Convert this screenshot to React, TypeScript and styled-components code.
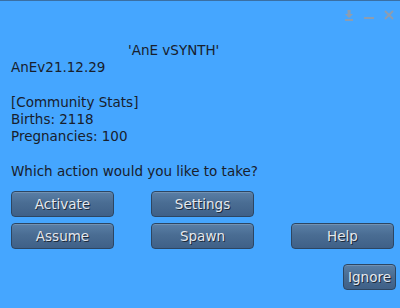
import React from "react";
import styled, { createGlobalStyle } from "styled-components";

const GlobalStyle = createGlobalStyle`
  html, body {
    margin: 0;
    padding: 0;
    width: 400px;
    height: 308px;
    overflow: hidden;
    background: #45a6ff;
  }
`;

const Dialog = styled.div`
  width: 400px;
  height: 308px;
  box-sizing: border-box;
  background: #45a6ff;
  border-top: 1px solid #3a6fa3;
  font-family: "DejaVu Sans", "Liberation Sans", sans-serif;
  color: #18202c;
  display: flex;
  flex-direction: column;
`;

const TitleBar = styled.div`
  height: 27px;
  display: flex;
  justify-content: flex-end;
  align-items: flex-start;
  gap: 10px;
  padding: 9px 6px 0 0;
  box-sizing: border-box;
`;

const IconButton = styled.div`
  width: 10px;
  height: 11px;
  display: flex;
`;

const Message = styled.div`
  padding: 14px 0 0 11px;
  font-size: 13.5px;
  line-height: 17.3px;
  white-space: pre;
`;

const Title = styled.div`
  padding-left: 117px;
`;

const ButtonGrid = styled.div`
  display: grid;
  grid-template-columns: repeat(3, 103px);
  column-gap: 37px;
  row-gap: 6px;
  padding: 11px 0 0 11px;
`;

const Button = styled.button<{ $wide?: boolean }>`
  height: 26px;
  width: ${(p) => (p.$wide ? "103px" : "auto")};
  box-sizing: border-box;
  border: 1px solid #2c4663;
  border-radius: 4px;
  background: linear-gradient(#5a7fa6, #4a6d93 45%, #3f6087);
  box-shadow: inset 0 1px 0 rgba(255, 255, 255, 0.15);
  color: #e4e8ee;
  font-family: "DejaVu Sans", "Liberation Sans", sans-serif;
  font-size: 13.5px;
  text-shadow: 1px 1px 0 #1c2a3a;
  padding: 0 4px;
  cursor: pointer;
`;

const Footer = styled.div`
  display: flex;
  justify-content: flex-end;
  padding: 15px 4px 0 0;
`;

const DockIcon = () => (
  <svg width="10" height="11" viewBox="0 0 10 11">
    <path d="M3.5 0h3v4h2.5l-4 4-4-4h2.5z" fill="#8d9db0" />
    <rect x="1" y="9" width="8" height="2" fill="#8d9db0" />
  </svg>
);

const MinIcon = () => (
  <svg width="10" height="11" viewBox="0 0 10 11">
    <rect x="0" y="7" width="10" height="2" fill="#8d9db0" />
  </svg>
);

const CloseIcon = () => (
  <svg width="10" height="11" viewBox="0 0 10 11">
    <path d="M1 1l8 8M9 1l-8 8" stroke="#8d9db0" strokeWidth="2" />
  </svg>
);

const buttons = ["Activate", "Settings", "", "Assume", "Spawn", "Help"];

const App: React.FC = () => {
  return (
    <>
      <GlobalStyle />
      <Dialog>
        <TitleBar>
          <IconButton>
            <DockIcon />
          </IconButton>
          <IconButton>
            <MinIcon />
          </IconButton>
          <IconButton>
            <CloseIcon />
          </IconButton>
        </TitleBar>
        <Message>
          <Title>'AnE vSYNTH'</Title>
          {"AnEv21.12.29\n\n[Community Stats]\nBirths: 2118\nPregnancies: 100\n\nWhich action would you like to take?"}
        </Message>
        <ButtonGrid>
          {buttons.map((label, i) =>
            label ? <Button key={label} $wide>{label}</Button> : <span key={i} />
          )}
        </ButtonGrid>
        <Footer>
          <Button>Ignore</Button>
        </Footer>
      </Dialog>
    </>
  );
};

export default App;
